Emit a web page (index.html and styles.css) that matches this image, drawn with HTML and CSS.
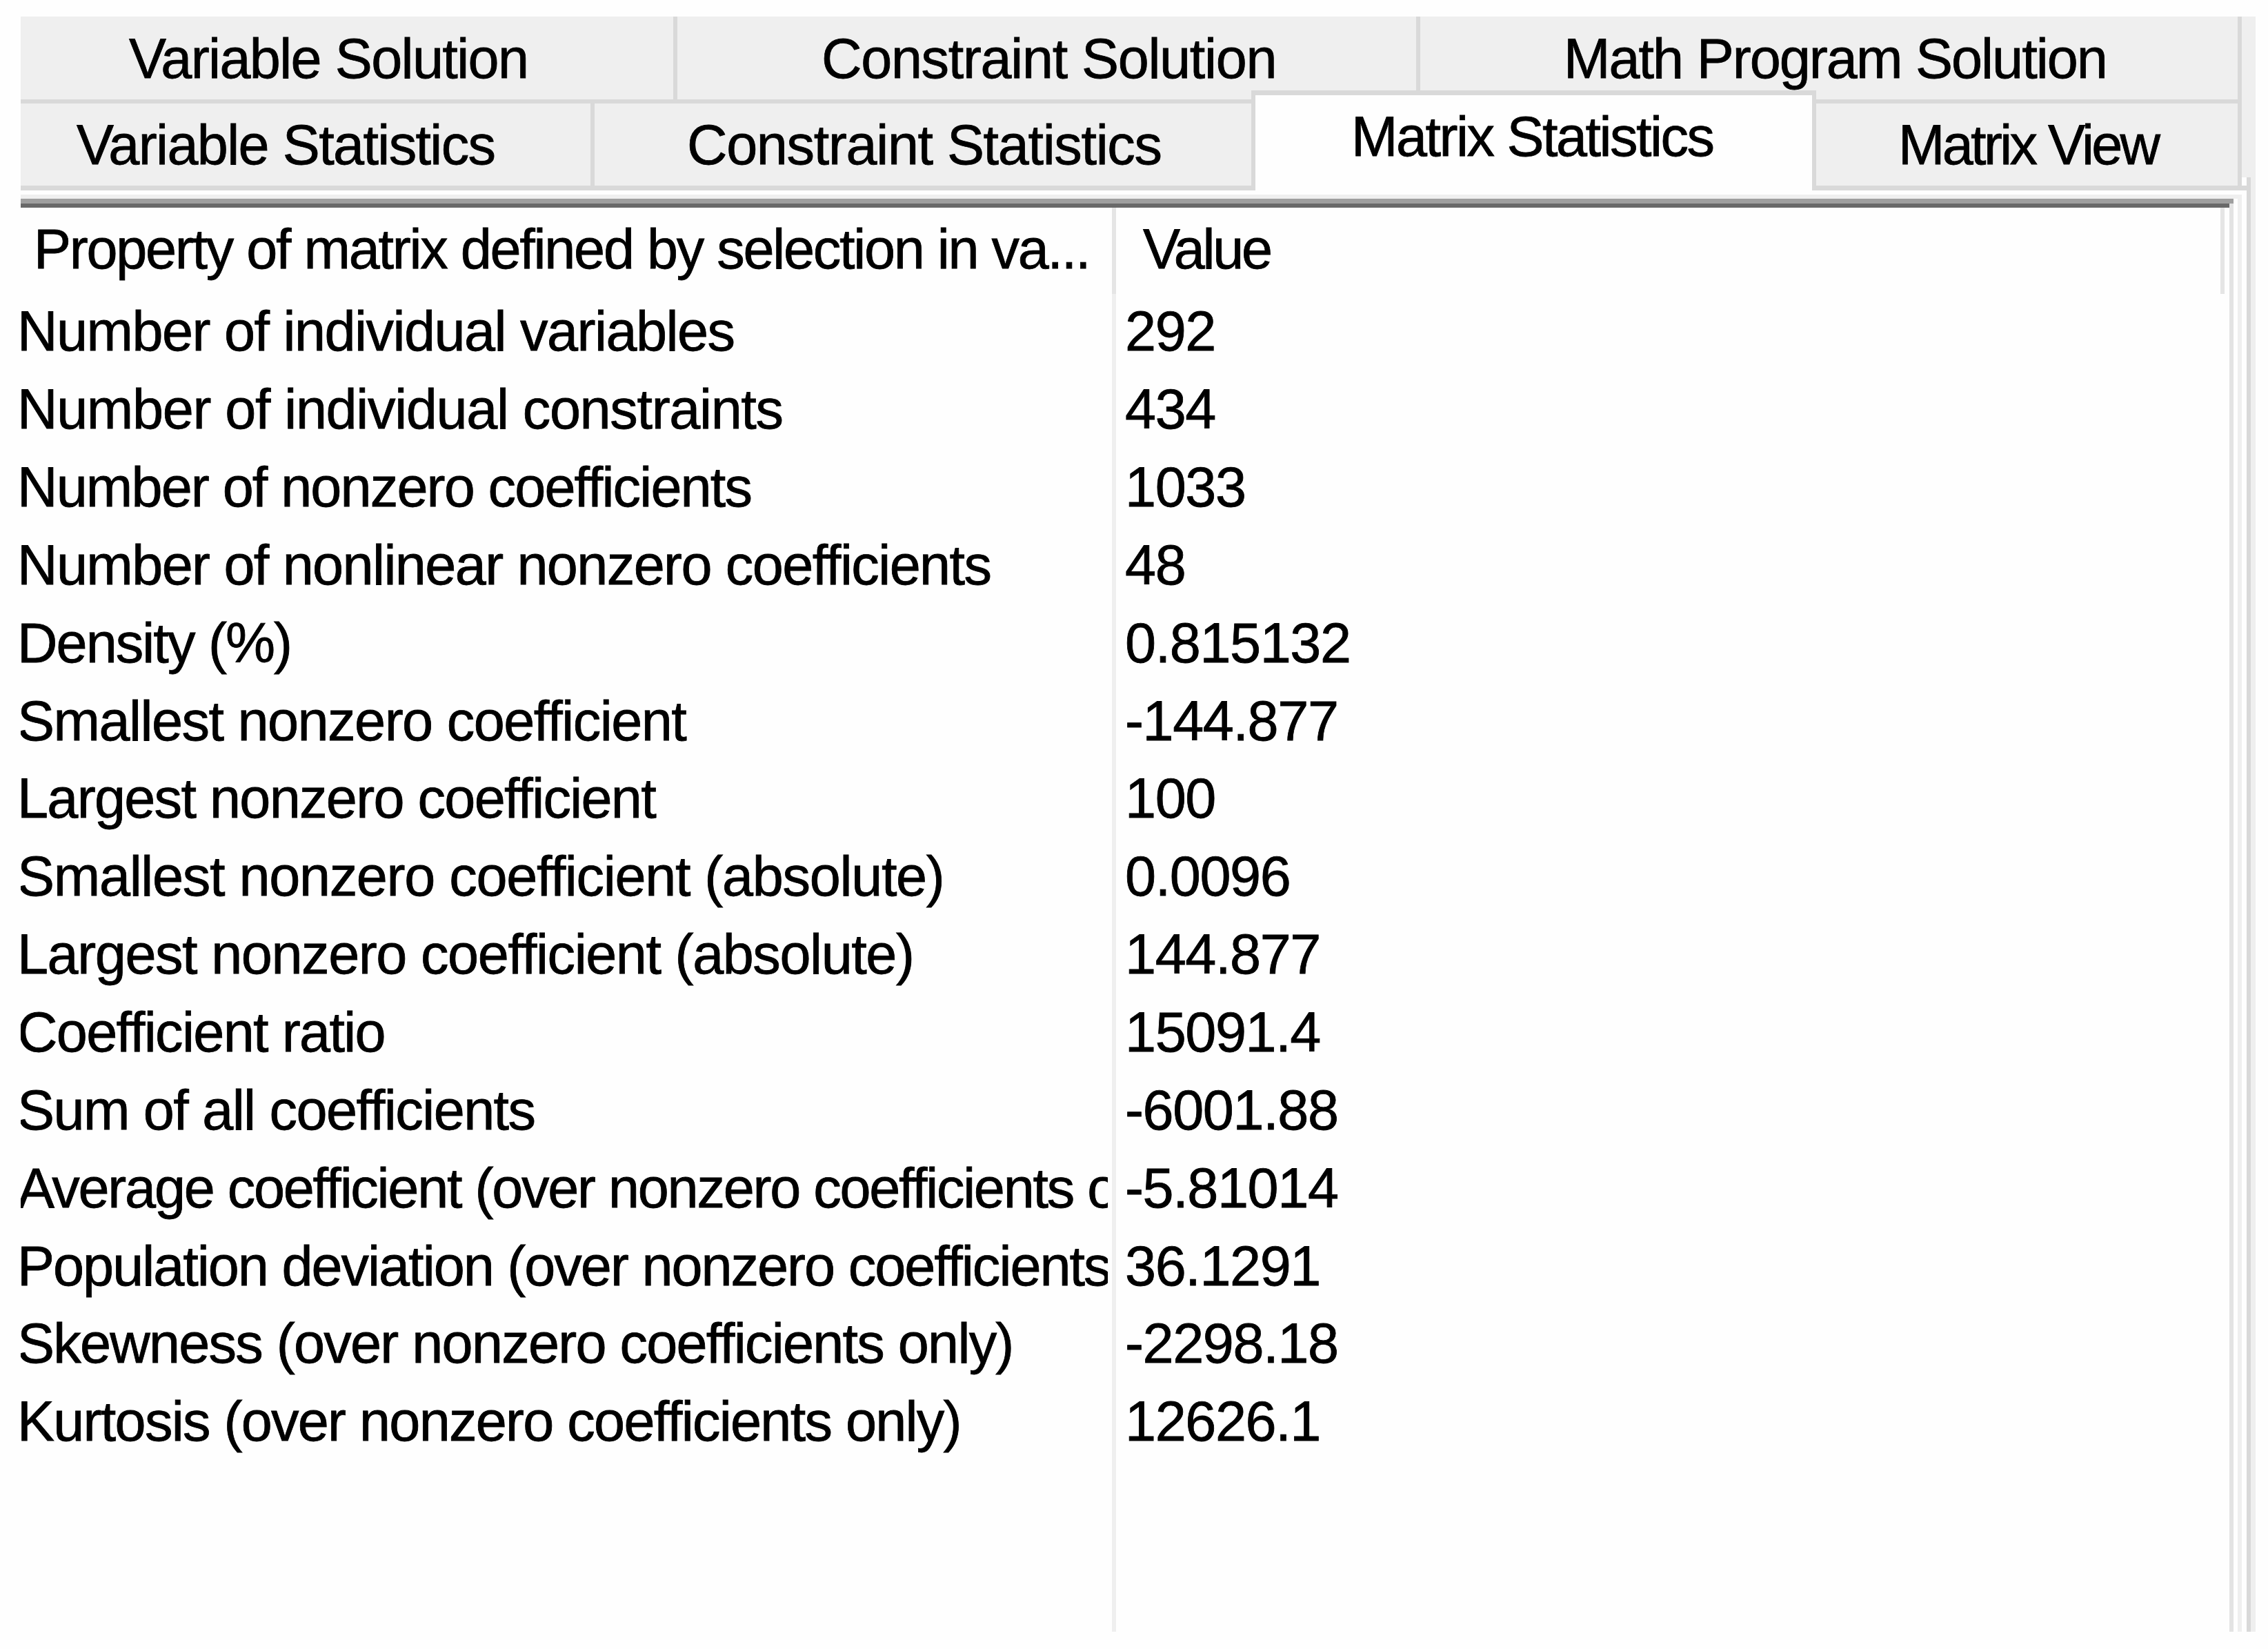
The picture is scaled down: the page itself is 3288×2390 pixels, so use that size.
FILE: index.html
```
<!DOCTYPE html>
<html lang="en">
<head>
<meta charset="utf-8">
<title>Matrix Statistics</title>
<link rel="stylesheet" href="styles.css">
</head>
<body>
<main class="window">
  <nav class="tabs tabs-back">
    <div class="tab variable-solution">Variable Solution</div>
    <div class="tab constraint-solution">Constraint Solution</div>
    <div class="tab program-solution">Math Program Solution</div>
  </nav>
  <nav class="tabs tabs-front">
    <div class="tab variable-statistics">Variable Statistics</div>
    <div class="tab constraint-statistics">Constraint Statistics</div>
    <div class="tab selected">Matrix Statistics</div>
    <div class="tab matrix-view">Matrix View</div>
    <div class="notch"></div>
    <div class="edge"></div>
  </nav>
  <section class="panel">
    <div class="frame">
      <div class="sunken">
        <div class="well">
          <div class="list">
            <header class="head">
              <div class="head-cell head-property">Property of matrix defined by selection in va...</div>
              <div class="head-cell head-value">Value</div>
            </header>
            <div class="body">
              <div class="names">
                <div class="cell" style="letter-spacing:-1.52px">Number of individual variables</div>
                <div class="cell" style="letter-spacing:-1.34px">Number of individual constraints</div>
                <div class="cell" style="letter-spacing:-1.85px">Number of nonzero coefficients</div>
                <div class="cell" style="letter-spacing:-1.6px">Number of nonlinear nonzero coefficients</div>
                <div class="cell" style="letter-spacing:-1.95px">Density (%)</div>
                <div class="cell" style="letter-spacing:-1.51px">Smallest nonzero coefficient</div>
                <div class="cell" style="letter-spacing:-1.71px">Largest nonzero coefficient</div>
                <div class="cell" style="letter-spacing:-1.3px">Smallest nonzero coefficient (absolute)</div>
                <div class="cell" style="letter-spacing:-1.43px">Largest nonzero coefficient (absolute)</div>
                <div class="cell" style="letter-spacing:-1.67px">Coefficient ratio</div>
                <div class="cell" style="letter-spacing:-1.56px">Sum of all coefficients</div>
                <div class="cell" style="letter-spacing:-2.25px">Average coefficient (over nonzero coefficients only)</div>
                <div class="cell" style="letter-spacing:-1.99px">Population deviation (over nonzero coefficients only)</div>
                <div class="cell" style="letter-spacing:-1.76px">Skewness (over nonzero coefficients only)</div>
                <div class="cell" style="letter-spacing:-1.74px">Kurtosis (over nonzero coefficients only)</div>
              </div>
              <div class="values">
                <div class="cell">292</div>
                <div class="cell">434</div>
                <div class="cell">1033</div>
                <div class="cell">48</div>
                <div class="cell">0.815132</div>
                <div class="cell">-144.877</div>
                <div class="cell">100</div>
                <div class="cell">0.0096</div>
                <div class="cell">144.877</div>
                <div class="cell">15091.4</div>
                <div class="cell">-6001.88</div>
                <div class="cell">-5.81014</div>
                <div class="cell">36.1291</div>
                <div class="cell">-2298.18</div>
                <div class="cell">12626.1</div>
              </div>
            </div>
          </div>
        </div>
      </div>
    </div>
  </section>
</main>
</body>
</html>
```
FILE: styles.css
```
* {
  box-sizing: border-box;
}

body {
  margin: 0;
  padding: 24px 0 0 30px;
  height: 2390px;
  overflow: hidden;
  background: #fefefe;
  color: #000;
  font: 81px/121px "Liberation Sans", Arial, sans-serif;
  -webkit-text-stroke: 0.8px #000;
  white-space: nowrap;
}

.window {
  display: flex;
  flex-direction: column;
  width: 3240px;
  height: 2341px;
  background: #efefef;
}

/* Tab strips */
.tabs {
  display: flex;
  flex: none;
  height: 126px;
}

.tab {
  flex: none;
  border-right: 6px solid #d9d9d9;
  border-bottom: 6px solid #d9d9d9;
}

.tabs-back .tab {
  line-height: 122px;
}

.tabs-front .tab {
  border-bottom-width: 7px;
}

.variable-solution {
  width: 952px;
  padding-left: 157px;
  letter-spacing: -1.65px;
}

.constraint-solution {
  width: 1077px;
  padding-left: 209px;
  letter-spacing: -1.33px;
}

.program-solution {
  width: 1191px;
  padding-left: 208px;
  letter-spacing: -1.98px;
}

.variable-statistics {
  width: 832px;
  padding-left: 81px;
  letter-spacing: -1.65px;
}

.constraint-statistics {
  width: 952px;
  padding-left: 134px;
  border-right: 0;
  letter-spacing: -1.34px;
}

.tabs-front .selected {
  width: 819px;
  height: 145px;
  margin-top: -19px;
  padding-left: 139px;
  border: solid #d9d9d9;
  border-width: 7px 6px 0;
  background: #fefefe;
  line-height: 120px;
  letter-spacing: -2.5px;
}

.matrix-view {
  width: 617px;
  padding-left: 119px;
  letter-spacing: -3.7px;
}

.notch,
.edge {
  align-self: flex-end;
  height: 19px;
}

.notch {
  width: 7px;
  border-bottom: 7px solid #d9d9d9;
  background: #fefefe;
}

.edge {
  width: 6px;
  background: #d9d9d9;
}

/* Tab page and its nested bevels */
.panel {
  display: flex;
  flex: 1;
  width: 3233px;
  padding: 6px 7px 0 0;
  border-right: 6px solid #d9d9d9;
  background: #fefefe;
}

.frame {
  display: flex;
  flex: 1;
  padding-right: 6px;
  border: solid #efefef;
  border-width: 6px 6px 0 0;
}

.sunken {
  display: flex;
  flex: 1;
  border-top: 7px solid #9f9f9f;
}

.well {
  display: flex;
  flex: 1;
  border-right: 6px solid #e3e3e3;
}

.list {
  display: flex;
  flex: 1;
  flex-direction: column;
  border-top: 6px solid #696969;
}

/* Column headings */
.head {
  display: flex;
  height: 125px;
  line-height: 121px;
}

.head-cell {
  border-right: 6px solid #e5e5e5;
}

.head-property {
  width: 1588px;
  padding-left: 19px;
  letter-spacing: -2.26px;
}

.head-value {
  width: 1607px;
  padding-left: 39px;
  letter-spacing: -3.3px;
}

/* Rows */
.body {
  display: flex;
  flex: 1;
  line-height: 112.87px;
}

.names {
  width: 1588px;
  padding-right: 6px;
  border-right: 6px solid #efefef;
}

.values {
  padding-left: 13px;
  letter-spacing: -1.4px;
}

.cell {
  height: 112.87px;
}

.names .cell {
  overflow: hidden;
  text-indent: -5px;
}

.cell:first-child {
  margin-top: -1.8px;
}
```
